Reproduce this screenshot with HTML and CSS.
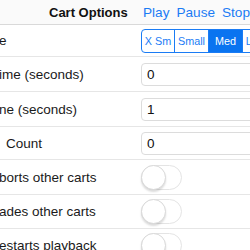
FILE: index.html
```html
<!DOCTYPE html>
<html lang="en">
<head>
    <meta charset="UTF-8">
    <meta name="viewport" content="width=device-width, initial-scale=1.0">
    <title>Cart Options</title>
    <link rel="stylesheet" href="styles.css">
</head>
<body>
    <div class="screen">
        <div class="header">
            <div class="title">Cart Options</div>
            <div class="actions">
                <a href="#" class="action">Play</a>
                <a href="#" class="action">Pause</a>
                <a href="#" class="action">Stop</a>
            </div>
        </div>

        <div class="row row-size">
            <div class="label">e</div>
            <div class="segmented">
                <span class="segment">X Sm</span>
                <span class="segment">Small</span>
                <span class="segment selected">Med</span>
                <span class="segment">Large</span>
                <span class="segment">X Lg</span>
            </div>
        </div>

        <div class="row row-tall">
            <div class="label">ime (seconds)</div>
            <input type="text" class="field" value="0">
        </div>

        <div class="row row-tall">
            <div class="label">ne (seconds)</div>
            <input type="text" class="field" value="1">
        </div>

        <div class="row row-short">
            <div class="label label-count">Count</div>
            <input type="text" class="field" value="0">
        </div>

        <div class="row row-tall">
            <div class="label">borts other carts</div>
            <div class="switch"><span class="knob"></span></div>
        </div>

        <div class="row row-mid">
            <div class="label">ades other carts</div>
            <div class="switch"><span class="knob"></span></div>
        </div>

        <div class="row row-mid">
            <div class="label">estarts playback</div>
            <div class="switch"><span class="knob"></span></div>
        </div>
    </div>
</body>
</html>
```

FILE: styles.css
```css
body {
    font-family: "Liberation Sans", Arial, sans-serif;
    margin: 0;
    padding: 0;
    color: #111;
    background: #fff;
    overflow: hidden;
}
.screen {
    width: 250px;
    height: 250px;
    overflow: hidden;
}
.header {
    display: flex;
    align-items: center;
    height: 24px;
    padding-left: 49px;
    border-bottom: 1px solid #d9d9d9;
    background: #fafafa;
    white-space: nowrap;
}
.title {
    width: 98px;
    font-size: 13px;
    font-weight: bold;
    color: #111;
}
.actions {
    display: flex;
    gap: 7px;
}
.action {
    color: #1a7cf5;
    font-size: 13.6px;
    text-decoration: none;
}
.row {
    display: grid;
    grid-template-columns: 141px auto;
    align-items: center;
    height: 34px;
    border-bottom: 1px solid #e6e6e6;
    white-space: nowrap;
}
.row-size {
    height: 31px;
}
.row-short {
    height: 32px;
}
.row-mid {
    height: 33px;
}
.label {
    font-size: 13.5px;
    color: #1a1a1a;
    margin-left: -1px;
}
.label-count {
    padding-left: 7px;
}
.segmented {
    display: flex;
    height: 24px;
    border: 1px solid #1a7cf5;
    border-radius: 4px;
    box-sizing: border-box;
    width: 170px;
}
.segment {
    width: 33px;
    flex-shrink: 0;
    display: flex;
    align-items: center;
    justify-content: center;
    font-size: 10.8px;
    color: #1a7cf5;
    border-left: 1px solid #1a7cf5;
}
.segment:first-child {
    border-left: none;
    width: 32px;
}
.segment.selected {
    background: #0a74f0;
    color: #fff;
}
.field {
    width: 140px;
    height: 23px;
    box-sizing: border-box;
    border: 1px solid #dcdcdc;
    border-radius: 4px;
    padding: 0 5px;
    font-family: "Liberation Sans", Arial, sans-serif;
    font-size: 13.5px;
    color: #111;
    outline: none;
}
.switch {
    position: relative;
    width: 41px;
    height: 25px;
    box-sizing: border-box;
    border: 1px solid #e4e4e4;
    border-radius: 13px;
    background: #fff;
}
.knob {
    position: absolute;
    left: -1px;
    top: -1px;
    width: 25px;
    height: 25px;
    box-sizing: border-box;
    border-radius: 50%;
    background: #fff;
    border: 1px solid #d9d9d9;
    box-shadow: 0 2px 2px rgba(0, 0, 0, 0.14);
}
```
